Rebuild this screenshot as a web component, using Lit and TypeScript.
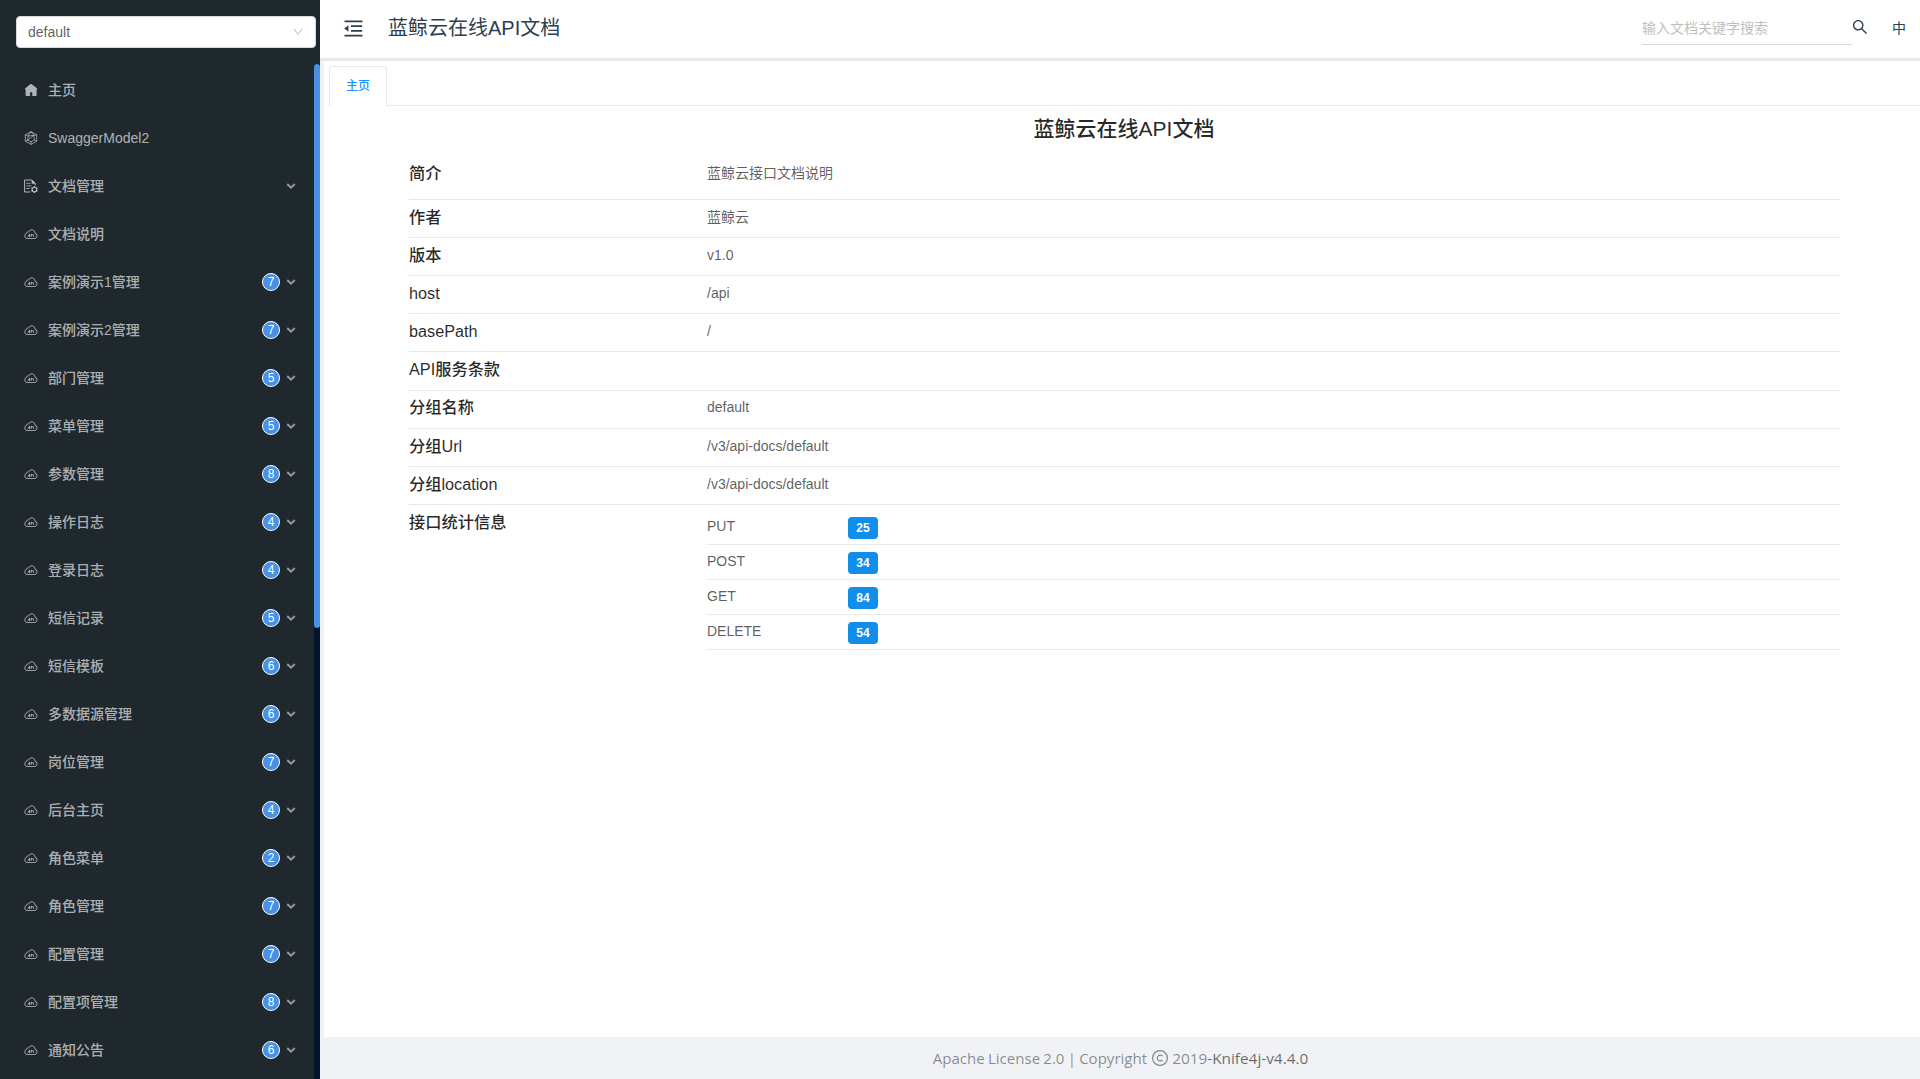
import { LitElement, html, css, svg, nothing } from "lit";
import { customElement } from "lit/decorators.js";

type IconName = "home" | "model" | "doc" | "cloud";

interface MenuItem {
  label: string;
  icon: IconName;
  count?: number;
  expandable?: boolean;
}

const group = (label: string, count: number): MenuItem => ({ label, icon: "cloud", count, expandable: true });

const MENU: MenuItem[] = [
  { label: "主页", icon: "home" },
  { label: "SwaggerModel2", icon: "model" },
  { label: "文档管理", icon: "doc", expandable: true },
  { label: "文档说明", icon: "cloud" },
  group("案例演示1管理", 7),
  group("案例演示2管理", 7),
  group("部门管理", 5),
  group("菜单管理", 5),
  group("参数管理", 8),
  group("操作日志", 4),
  group("登录日志", 4),
  group("短信记录", 5),
  group("短信模板", 6),
  group("多数据源管理", 6),
  group("岗位管理", 7),
  group("后台主页", 4),
  group("角色菜单", 2),
  group("角色管理", 7),
  group("配置管理", 7),
  group("配置项管理", 8),
  group("通知公告", 6),
];

const INFO: [string, string][] = [
  ["简介", "蓝鲸云接口文档说明"],
  ["作者", "蓝鲸云"],
  ["版本", "v1.0"],
  ["host", "/api"],
  ["basePath", "/"],
  ["API服务条款", ""],
  ["分组名称", "default"],
  ["分组Url", "/v3/api-docs/default"],
  ["分组location", "/v3/api-docs/default"],
];

const STATS: [string, number][] = [
  ["PUT", 25],
  ["POST", 34],
  ["GET", 84],
  ["DELETE", 54],
];

const ICONS = {
  home: svg`<path fill="currentColor" d="M7 .9Q7.4.9 7.8 1.2L12.9 5.3Q13.4 5.8 13.1 6.3L12.6 6.8V12.2Q12.6 13 11.8 13H8.3V9.7Q8.3 9.2 7.8 9.2H6.6Q6.1 9.2 6.1 9.7V13H2.4Q1.6 13 1.6 12.2V6.8L1.1 6.3Q.7 5.8 1.3 5.3L6.2 1.2Q6.6.9 7 .9Z"/>`,
  model: svg`<g fill="none" stroke="currentColor" stroke-width=".75" stroke-linejoin="round">
    <path d="M7 .6 12.7 3.8V10.2L7 13.4 1.3 10.2V3.8Z"/>
    <path d="M7 .6 4.2 5 1.3 3.8M7 .6 9.8 4.4 12.7 3.8M4.2 5 9.8 4.4 10.4 9 7 10.8 3.6 9.2ZM1.3 10.2 3.6 9.2M12.7 10.2 10.4 9M7 13.4V10.8M9.8 4.4 3.6 9.2"/></g>`,
  doc: svg`<g fill="none" stroke="currentColor">
    <path d="M6.3 13H.6V1H7.8L11.2 4.4V6.4"/>
    <path d="M2.4 4.3H6.4M2.4 6.9H7.4M2.4 9.5H5.6" stroke-width=".9"/>
    <circle cx="10.4" cy="10.5" r="2.3" stroke-width="1.1"/>
    <path d="M10.4 7.1v1.1M10.4 12.8v1.1M7.4 8.8l1 .6M12.4 11.6l1 .6M7.4 12.2l1-.6M12.4 9.4l1-.6" stroke-width="1.2"/></g>
    <path fill="currentColor" d="M7.6.8 11.6 4.8H7.6Z"/>`,
  cloud: svg`<g fill="none" stroke="currentColor" stroke-linejoin="round">
    <path d="M3 11.5A2.6 2.6 0 0 1 2.6 6.4 2 2 0 0 1 4.7 4.7 3.3 3.3 0 0 1 11 6.1 2.8 2.8 0 0 1 11 11.5Z" stroke-width=".85"/>
    <path d="M3.9 9.8 5.5 7.2V9.8M4.5 9H5.5M7 9.8V7.3H7.9Q8.6 7.4 8.4 8.2L7 8.7M9.7 7.3V9.8" stroke-width=".8"/></g>`,
};

@customElement("side-menu")
class SideMenu extends LitElement {
  static styles = css`
    :host { display: flex; flex-direction: column; width: 320px; flex: none; height: 1079px; overflow: hidden; background: #1f282d; }
    .top { flex: none; height: 64px; box-sizing: border-box; padding: 16px 4px 0 16px; }
    .select { display: flex; align-items: center; justify-content: space-between; height: 32px; box-sizing: border-box;
      padding: 0 11px; border: 1px solid #d9d9d9; border-radius: 4px; background: #fff; color: rgba(0, 0, 0, .65); font-size: 14px; }
    .select svg { width: 12px; height: 12px; color: rgba(0, 0, 0, .25); }
    .scroll { display: flex; flex: 1; min-height: 0; }
    .list { flex: 1; min-width: 0; padding-top: 2px; overflow: hidden; }
    .item { display: flex; align-items: center; height: 48px; padding: 0 16px 0 24px; color: rgba(255, 255, 255, .65); font-size: 14px; }
    .icon { width: 14px; height: 14px; flex: none; margin-right: 10px; }
    .label { flex: 1; font-weight: 500; white-space: nowrap; line-height: 20px; height: 20px; padding-bottom: 1px; }
    .label.latin { padding-bottom: 0; }
    .badge { width: 18px; height: 18px; box-sizing: border-box; border: 1px solid #fff; border-radius: 50%; background: #4891e7;
      color: #fff; font-size: 12px; line-height: 16px; text-align: center; margin-right: 6px; }
    .arrow { width: 10px; height: 10px; flex: none; margin-right: 2px; opacity: .8; }
    .track { width: 6px; flex: none; background: #001529; }
    .thumb { height: 564px; border-radius: 3px; background: #4891e2; }
  `;
  render() {
    return html`
      <div class="top">
        <div class="select"><span>default</span>
          <svg viewBox="0 0 1024 1024"><path fill="currentColor" d="M884 256h-75c-5.1 0-9.9 2.5-12.9 6.6L512 654.2 227.9 262.6c-3-4.1-7.8-6.6-12.9-6.6h-75c-6.5 0-10.3 7.4-6.5 12.7l352.6 486.1c12.8 17.6 39 17.6 51.7 0l352.6-486.1c3.9-5.3.1-12.7-6.4-12.7z"/></svg>
        </div>
      </div>
      <div class="scroll">
        <div class="list">
          ${MENU.map((m) => html`<div class="item">
            <svg class="icon" viewBox="0 0 14 14">${ICONS[m.icon]}</svg>
            <span class="label ${m.icon === "model" ? "latin" : ""}">${m.label}</span>
            ${m.count ? html`<span class="badge">${m.count}</span>` : nothing}
            ${m.expandable ? html`<svg class="arrow" viewBox="0 0 10 10"><path d="M1.2 3.1 5 6.7 8.8 3.1" fill="none" stroke="currentColor" stroke-width="2"/></svg>` : nothing}
          </div>`)}
        </div>
        <div class="track"><div class="thumb"></div></div>
      </div>`;
  }
}

@customElement("doc-home")
class DocHome extends LitElement {
  static styles = css`
    :host { display: block; flex: 1; background: #fff; padding: 5px 0 0 5px; box-sizing: border-box; }
    .tabs { display: flex; height: 40px; }
    .tab { width: 58px; height: 40px; box-sizing: border-box; border: 1px solid #e8e8e8; border-bottom: 0; border-radius: 4px 4px 0 0;
      color: #1890ff; font-size: 12px; font-weight: 500; line-height: 38px; text-align: center; }
    .rest { flex: 1; border-bottom: 1px solid #e8e8e8; margin-right: 1px; }
    .title { margin: 0; padding-top: 7px; height: 47px; box-sizing: border-box; text-align: center; font-size: 21px; line-height: 31px;
      font-weight: 500; color: rgba(0, 0, 0, .85); padding-right: 1px; }
    .info { padding: 0 80px; }
    .row { display: flex; height: 38.13px; box-sizing: border-box; border-bottom: 1px solid #e8e8e8; padding-top: 4.9px; }
    .row.first { height: 46.9px; padding-top: 8px; }
    .row.last { height: auto; border: 0; padding-top: 5.1px; }
    .key { width: 298px; flex: none; font-size: 16.24px; line-height: 25px; font-weight: 500; color: rgba(0, 0, 0, .85); }
    .val { flex: 1; font-size: 14px; line-height: 25px; color: rgba(0, 0, 0, .65); }
    .stats { padding-top: 0; }
    .stat { display: flex; align-items: center; height: 35px; box-sizing: border-box; border-bottom: 1px solid #e8e8e8; }
    .method { width: 141px; }
    .num { width: 30px; height: 22px; margin-top: 2px; border-radius: 4px; background: #108ee9; color: #fff; font-size: 12px; font-weight: 700; line-height: 22px; text-align: center; }
  `;
  render() {
    return html`
      <div class="tabs"><div class="tab">主页</div><div class="rest"></div></div>
      <h2 class="title">蓝鲸云在线API文档</h2>
      <div class="info">
        ${INFO.map(([k, v], i) => html`<div class="row ${i === 0 ? "first" : ""}"><div class="key">${k}</div><div class="val">${v}</div></div>`)}
        <div class="row last"><div class="key">接口统计信息</div>
          <div class="val stats">
            ${STATS.map(([m, n]) => html`<div class="stat"><span class="method">${m}</span><span class="num">${n}</span></div>`)}
          </div>
        </div>
      </div>`;
  }
}

@customElement("app-root")
class AppRoot extends LitElement {
  static styles = css`
    :host { display: flex; width: 1920px; height: 1079px; overflow: hidden; background: #f0f2f5;
      font-family: "Liberation Sans", "Noto Sans CJK SC", sans-serif; color: rgba(0, 0, 0, .65); }
    .main { flex: 1; min-width: 0; display: flex; flex-direction: column; }
    .header { height: 58px; flex: none; display: flex; align-items: center; background: #fff; color: #2c3e50; box-sizing: border-box; padding-right: 14px; }
    .fold { width: 23px; height: 23px; margin: 0 23px 1px 22px; }
    .name { flex: 1; font-size: 20px; line-height: 30px; padding-bottom: 2px; }
    .search { width: 210px; height: 31px; box-sizing: border-box; margin-top: 1px; border-bottom: 1px solid #d9d9d9; font-size: 14px; line-height: 28px; color: #bfbfbf; }
    .find { width: 18px; height: 18px; margin: 0 23px 4px -1px; }
    .lang { font-size: 14px; line-height: 24px; padding-bottom: 3px; }
    .shade { height: 3px; flex: none; background: #e6eaee; }
    .body { flex: 1; display: flex; padding-left: 4px; }
    .footer { height: 42px; flex: none; display: flex; align-items: center; justify-content: center; padding-left: 1px; color: rgba(0, 0, 0, .45);
      font-family: "Open Sans", "Noto Sans", sans-serif; font-size: 15.05px; word-spacing: -.7px; white-space: pre; }
    .footer svg { width: 18px; height: 18px; margin: 0 3.5px; }
    .year { font-size: 15.35px; }
    .product { color: rgba(0, 0, 0, .58); }
  `;
  render() {
    return html`
      <side-menu></side-menu>
      <div class="main">
        <div class="header">
          <svg class="fold" viewBox="0 0 1024 1024"><path fill="currentColor" d="M408 442h480c4.4 0 8-3.6 8-8v-56c0-4.4-3.6-8-8-8H408c-4.4 0-8 3.6-8 8v56c0 4.4 3.6 8 8 8zm-8 204c0 4.4 3.6 8 8 8h480c4.4 0 8-3.6 8-8v-56c0-4.4-3.6-8-8-8H408c-4.4 0-8 3.6-8 8v56zm504-486H120c-4.4 0-8 3.6-8 8v56c0 4.4 3.6 8 8 8h784c4.4 0 8-3.6 8-8v-56c0-4.4-3.6-8-8-8zm0 632H120c-4.4 0-8 3.6-8 8v56c0 4.4 3.6 8 8 8h784c4.4 0 8-3.6 8-8v-56c0-4.4-3.6-8-8-8zM115.4 518.9L271.7 642c5.8 4.6 14.4.5 14.4-6.9V388.9c0-7.4-8.5-11.5-14.4-6.9L115.4 505.1a8.74 8.74 0 0 0 0 13.8z"/></svg>
          <span class="name">蓝鲸云在线API文档</span>
          <div class="search">输入文档关键字搜索</div>
          <svg class="find" viewBox="0 0 1024 1024"><path fill="currentColor" d="M909.6 854.5L649.9 594.8C690.2 542.7 712 479 712 412c0-80.2-31.3-155.4-87.9-212.1-56.6-56.7-132-87.9-212.1-87.9s-155.5 31.3-212.1 87.9C143.2 256.5 112 331.8 112 412c0 80.1 31.3 155.5 87.9 212.1C256.5 680.8 331.8 712 412 712c67 0 130.6-21.8 182.7-62l259.7 259.6a8.2 8.2 0 0 0 11.6 0l43.6-43.5a8.2 8.2 0 0 0 0-11.6zM570.4 570.4C528 612.7 471.8 636 412 636s-116-23.3-158.4-65.6C211.3 528 188 471.8 188 412s23.3-116.1 65.6-158.4C296 211.3 352.2 188 412 188s116.1 23.2 158.4 65.6S636 352.2 636 412s-23.3 116.1-65.6 158.4z"/></svg>
          <span class="lang">中</span>
        </div>
        <div class="shade"></div>
        <div class="body"><doc-home></doc-home></div>
        <div class="footer"><span>Apache License 2.0 | Copyright</span><svg viewBox="0 0 18 18" fill="none" stroke="currentColor" stroke-width="1.2"><circle cx="9" cy="9" r="7.4"/><path d="M11.5 7.2A2.9 2.9 0 1 0 11.5 10.8"/></svg><span class="year">2019<span class="product">-Knife4j-v4.4.0</span></span></div>
      </div>`;
  }
}
